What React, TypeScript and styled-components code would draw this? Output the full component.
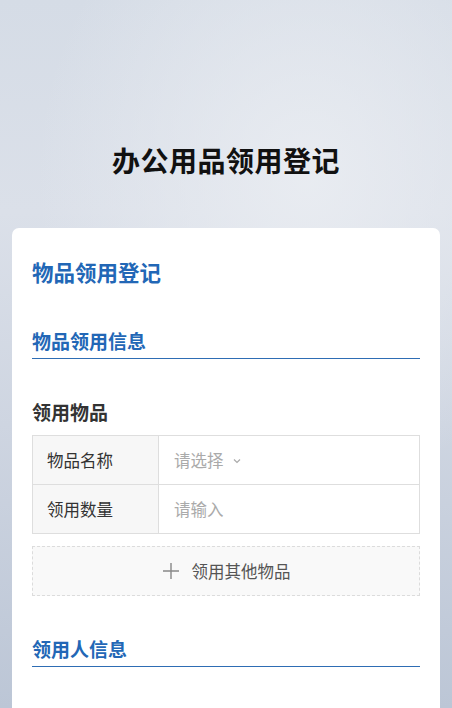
import React from 'react';
import styled, { createGlobalStyle } from 'styled-components';

const GlobalStyle = createGlobalStyle`
  html, body {
    margin: 0;
    padding: 0;
    height: 100%;
  }
  body {
    font-family: "Noto Sans CJK SC", "Noto Sans", sans-serif;
    background: #cfd6e2;
  }
`;

const Page = styled.div`
  height: 708px;
  box-sizing: border-box;
  padding: 0 12px;
  background:
    radial-gradient(ellipse 60% 45% at 68% 25%, rgba(234, 237, 242, 0.9), rgba(234, 237, 242, 0) 100%),
    linear-gradient(180deg, #d5dce6 0%, #dbe0e9 30%, #ced5e1 60%, #bcc6d6 100%);
  overflow: hidden;
`;

const Hero = styled.header`
  height: 228px;
  display: flex;
  align-items: flex-end;
  justify-content: center;
  padding-bottom: 50px;
  box-sizing: border-box;
`;

const Title = styled.h1`
  margin: 0;
  font-size: 28px;
  font-weight: 700;
  color: #111;
  letter-spacing: 0.5px;
  line-height: 36px;
`;

const Card = styled.main`
  box-sizing: border-box;
  background: #fff;
  border-radius: 7px 7px 0 0;
  padding: 30px 20px 40px;
  height: 480px;
`;

const CardTitle = styled.h2`
  margin: 0 0 42px;
  font-size: 21.5px;
  line-height: 28px;
  font-weight: 700;
  color: #2267b6;
`;

const Section = styled.section<{ $gap?: number }>`
  margin-bottom: ${p => p.$gap ?? 0}px;
`;

const SectionTitle = styled.h3`
  margin: 0;
  font-size: 19px;
  line-height: 26px;
  font-weight: 700;
  color: #2267b6;
  padding-bottom: 4px;
  border-bottom: 1.5px solid #2e6db4;
`;

const GroupTitle = styled.h4`
  margin: 40px 0 10px;
  font-size: 19px;
  line-height: 26px;
  font-weight: 700;
  color: #333;
`;

const Table = styled.div`
  border: 1px solid #dedede;
`;

const Row = styled.div`
  display: grid;
  grid-template-columns: 126px 1fr;
  height: 48px;
  & + & {
    border-top: 1px solid #dedede;
  }
`;

const Label = styled.div`
  background: #f7f7f7;
  border-right: 1px solid #dedede;
  display: flex;
  align-items: center;
  padding-left: 14px;
  font-size: 16.5px;
  color: #333;
`;

const Value = styled.div`
  display: flex;
  align-items: center;
  padding-left: 15px;
  font-size: 16.5px;
  color: #aaa;
  gap: 8px;
`;

const Chevron = styled.svg`
  width: 10px;
  height: 10px;
  margin-top: 1px;
`;

const AddButton = styled.button`
  margin-top: 12px;
  width: 100%;
  height: 50px;
  border: 1px dashed #dcdcdc;
  background: #f9f9f9;
  display: flex;
  align-items: center;
  justify-content: center;
  gap: 12px;
  font-family: inherit;
  font-size: 16.5px;
  color: #555;
  padding: 0;
`;

const PlusIcon = styled.svg`
  width: 18px;
  height: 18px;
`;

export default function App() {
  return (
    <>
      <GlobalStyle />
      <Page>
        <Hero>
          <Title>办公用品领用登记</Title>
        </Hero>
        <Card>
          <CardTitle>物品领用登记</CardTitle>
          <Section $gap={40}>
            <SectionTitle>物品领用信息</SectionTitle>
            <GroupTitle>领用物品</GroupTitle>
            <Table>
              <Row>
                <Label>物品名称</Label>
                <Value>
                  请选择
                  <Chevron viewBox="0 0 10 10" fill="none" stroke="#aaa" strokeWidth="1.2">
                    <path d="M2 3.5 L5 6.5 L8 3.5" />
                  </Chevron>
                </Value>
              </Row>
              <Row>
                <Label>领用数量</Label>
                <Value>请输入</Value>
              </Row>
            </Table>
            <AddButton type="button">
              <PlusIcon viewBox="0 0 18 18" fill="none" stroke="#888" strokeWidth="1.4">
                <path d="M9 1 V17 M1 9 H17" />
              </PlusIcon>
              领用其他物品
            </AddButton>
          </Section>
          <Section>
            <SectionTitle>领用人信息</SectionTitle>
          </Section>
        </Card>
      </Page>
    </>
  );
}
